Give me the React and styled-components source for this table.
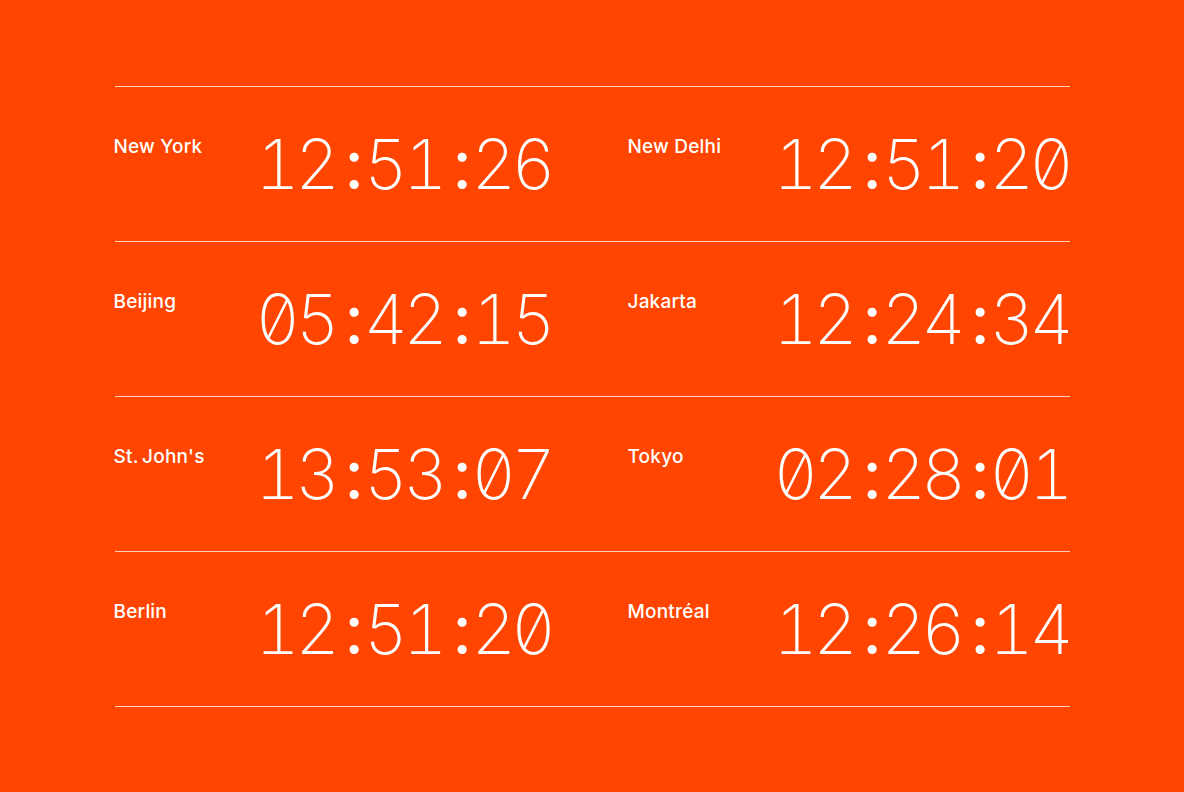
import styled, { createGlobalStyle } from 'styled-components';

const GlobalStyle = createGlobalStyle`
    html, body {
        margin: 0;
        padding: 0;
        background: #ff4500;
    }
`;

const clocks = [
    ['New York', '12:51:26', 'New Delhi', '12:51:20'],
    ['Beijing', '05:42:15', 'Jakarta', '12:24:34'],
    ["St.\u2009John's", '13:53:07', 'Tokyo', '02:28:01'],
    ['Berlin', '12:51:20', 'Montréal', '12:26:14'],
];

function Clock({ value }) {
    const [h, m, s] = value.split(':');
    return (
        <Time>
            {h}
            <Colon>:</Colon>
            {m}
            <Colon>:</Colon>
            {s}
        </Time>
    );
}

export default function App() {
    return (
        <Page>
            <GlobalStyle />
            <Board>
                {clocks.map((row, i) => (
                    <Row key={i}>
                        <City>{row[0]}</City>
                        <Clock value={row[1]} />
                        <City>{row[2]}</City>
                        <Clock value={row[3]} />
                    </Row>
                ))}
            </Board>
        </Page>
    );
}

const Page = styled.div`
    width: 1184px;
    height: 792px;
    background: #ff4500;
    padding-top: 86px;
    box-sizing: border-box;
    color: #fff;
`;

const Board = styled.div`
    width: 955px;
    margin: 0 auto;
    border-top: 1px solid rgba(255, 255, 255, 0.75);
`;

const Row = styled.div`
    display: grid;
    grid-template-columns: 147px 367px 151px 1fr;
    height: 155px;
    box-sizing: border-box;
    border-bottom: 1px solid rgba(255, 255, 255, 0.75);
    align-items: start;
`;

const City = styled.div`
    font-family: Inter, 'Noto Sans', sans-serif;
    font-weight: 500;
    font-size: 19px;
    line-height: 22px;
    padding-top: 49px;
    margin-left: -1px;
    letter-spacing: 0.2px;
`;

const Time = styled.div`
    padding-top: 37px;
    margin-left: -6px;
    font-family: Inter, 'Noto Sans', sans-serif;
    font-weight: 250;
    font-size: 69px;
    line-height: 80px;
    letter-spacing: -4.9px;
    font-feature-settings: 'zero' 1, 'tnum' 1;
    white-space: nowrap;
`;

const Colon = styled.span`
    display: inline-block;
    margin: 0 5px 0 10px;
    font-weight: 400;
`;
